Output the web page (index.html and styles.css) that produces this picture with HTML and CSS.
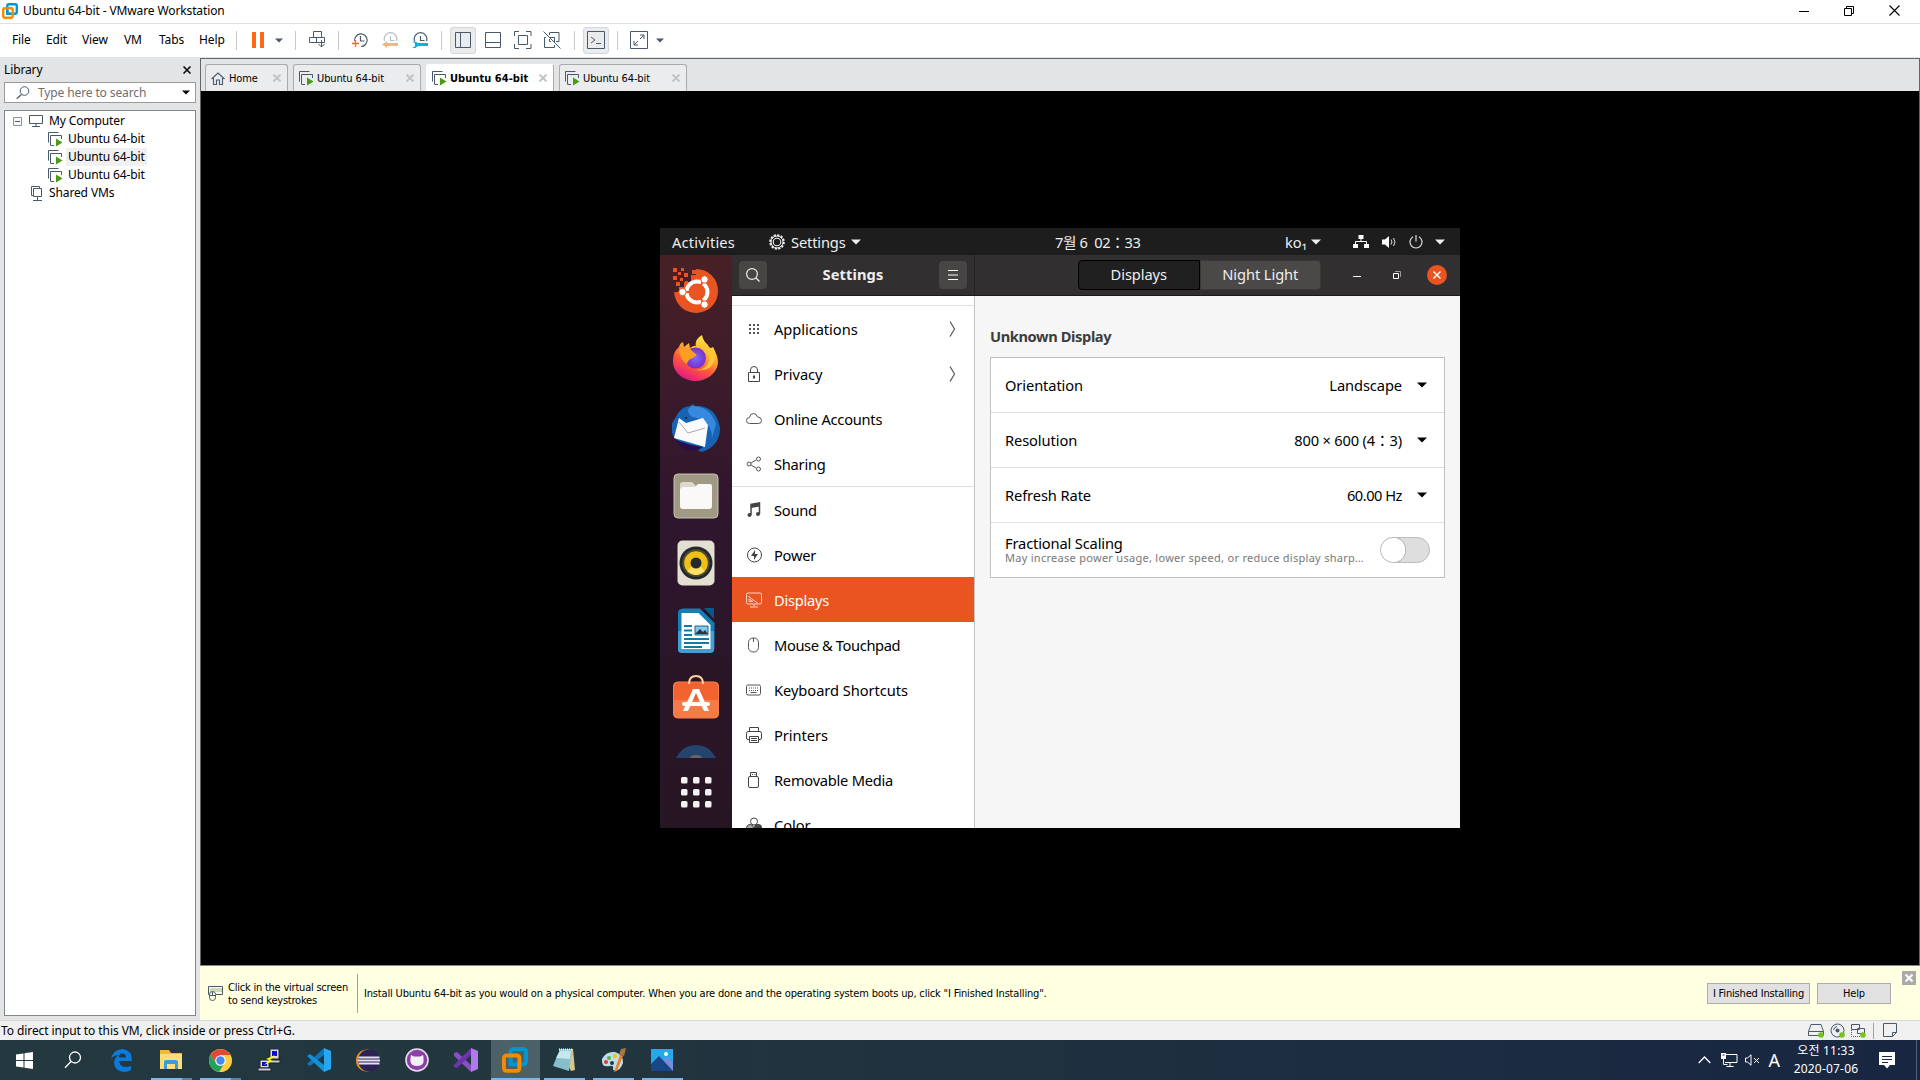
FILE: index.html
```html
<!DOCTYPE html>
<html lang="en">
<head>
<meta charset="utf-8">
<title>Ubuntu 64-bit - VMware Workstation</title>
<link rel="stylesheet" href="styles.css">
</head>
<body>
<svg class="defs" width="0" height="0">
  <defs>
    <symbol id="vmware" viewBox="0 0 16 16"><rect x="5.3" y="1.2" width="9.5" height="9.5" rx="1.6" fill="none" stroke="#0095d3" stroke-width="2.4"/><rect x="1.2" y="5.2" width="9.5" height="9.5" rx="1.6" fill="none" stroke="#f38b00" stroke-width="2.4"/><path d="M5.3 7V10.7H8.5" fill="none" stroke="#0095d3" stroke-width="2.4"/></symbol>
    <symbol id="vm" viewBox="0 0 15 15"><path d="M.5 10.5V.5h10M3 13H2.500V3.500h11V7M2.500 13.500H6" fill="none" stroke="#47596b"/><path d="M8 6.500v8l6.500-4z" fill="#489b12"/></symbol>
    <symbol id="clock" viewBox="0 0 16 16"><path d="M2.600 9A6.300 6.300 0 1 1 9 14.500M8.500 4v5h4" fill="none" stroke="currentColor" stroke-width="1.200"/></symbol>
    <symbol id="clocktop" viewBox="0 0 16 16"><path d="M2.600 9A6.300 6.300 0 1 1 14.500 9M8.500 4v4.500h4" fill="none" stroke="currentColor" stroke-width="1.200"/></symbol>
    <symbol id="tabx" viewBox="0 0 8 8"><path d="M.5 .5l7 7M7.500 .5l-7 7" stroke="#c3c4c6" stroke-width="2"/></symbol>
    <symbol id="down" viewBox="0 0 10 6"><path d="M0 .5h10L5 5.500z" fill="currentColor"/></symbol>
    <symbol id="chev" viewBox="0 0 8 16"><path d="M1 .5l4.500 7.500L1 15.500" fill="none" stroke="#555" stroke-width="1.200"/></symbol>
  </defs>
</svg>

<header class="titlebar">
  <svg width="16" height="16"><use href="#vmware"/></svg>
  <h1>Ubuntu 64-bit - VMware Workstation</h1>
  <div class="winbtns">
    <svg width="10" height="10"><path d="M0 5.500h10" stroke="#000"/></svg>
    <svg width="10" height="10"><path d="M.5 2.500h7v7h-7zM2.500 2V.5h7v7H8" fill="none" stroke="#000"/></svg>
    <svg width="11" height="11"><path d="M.5 .5l10 10M10.500 .5l-10 10" stroke="#000" stroke-width="1.100"/></svg>
  </div>
</header>

<nav class="menubar">
  <span>File</span><span>Edit</span><span>View</span><span>VM</span><span>Tabs</span><span>Help</span>
  <i class="sep"></i>
  <svg width="12" height="16"><path d="M0 0h4v16H0zM8 0h4v16H8z" fill="#ff671b"/></svg>
  <svg class="slate" width="8" height="5"><use href="#down"/></svg>
  <i class="sep"></i>
  <svg width="17" height="18"><path d="M4.500 .5h8v6h-8zM.5 6.500h7v5h-7zM7.500 6.500h8v5h-8zM12.500 9v7M9.500 13l3 3 3-3" fill="none" stroke="#47596b"/></svg>
  <i class="sep"></i>
  <svg class="slate" width="16" height="16"><use href="#clock"/><path d="M0 11.500h7M3.500 8v7" stroke="#ff671b" stroke-width="1.300"/></svg>
  <svg class="muted" width="16" height="16"><use href="#clocktop"/><path d="M0 12.500l5-3.500v2h11v3H5v2z" fill="#ffb08a"/></svg>
  <svg class="slate" width="16" height="16"><use href="#clocktop"/><path d="M0 9.500h3.500L6 11h10v3H6l-2.500 2H0l3-1.800v-3z" fill="#00b7d4"/></svg>
  <i class="sep"></i>
  <b class="pressed"><svg width="16" height="16"><path d="M.5 .5h15v15H.5zM5.500 0v16" fill="none" stroke="#47596b"/></svg></b>
  <svg width="17" height="16"><path d="M1.500 .5h15v15h-15zM1 10.500h16" fill="none" stroke="#47596b"/></svg>
  <svg width="19" height="18"><path d="M1.500 5V.5H6M13 .5h5V5M18 13v4.500h-5M6 17.500H1.500V13M5.500 4.500h9v9h-9z" fill="none" stroke="#47596b"/></svg>
  <svg width="19" height="18"><path d="M7 1.500h9v9h-3M3 6.500h-1.500v10h10V14M7 6.500h4.500V11M6.500 1.500V4M8 10.500h-1.500V8M.5 .5l17 17" fill="none" stroke="#47596b"/></svg>
  <i class="sep"></i>
  <b class="pressed"><svg width="18" height="18"><path d="M.5 .5h17v17H.5zM4 6l4 3-4 3M9 12.500h5" fill="none" stroke="#47596b"/></svg></b>
  <i class="sep"></i>
  <svg width="18" height="18"><path d="M.5 .5h17v17H.5zM10 4h4v4M4 10v4h4M14 4l-4 4M4 14l4-4" fill="none" stroke="#47596b"/></svg>
  <svg class="slate" width="8" height="5"><use href="#down"/></svg>
</nav>

<div class="workspace">
  <aside class="library">
    <div class="lib-head"><span>Library</span><svg width="8" height="8"><path d="M.5 .5l7 7M7.500 .5l-7 7" stroke="#000" stroke-width="1.500"/></svg></div>
    <div class="search"><svg width="14" height="14"><circle cx="8.500" cy="5" r="4.300" fill="none" stroke="#47596b"/><path d="M5.500 8.500L.7 12.800" stroke="#47596b" stroke-width="1.200"/></svg><span>Type here to search</span><svg width="8" height="5"><use href="#down"/></svg></div>
    <div class="tree">
      <div class="node root"><svg width="9" height="9"><path d="M.5 .5h8v8h-8z" fill="#fafafa" stroke="#919191"/><path d="M2 4.500h5" stroke="#3a56a5"/></svg><svg width="14" height="12"><path d="M.5 .5h13v8H.5zM7 9v2M3 11.500h8" fill="none" stroke="#47596b"/></svg><span>My Computer</span></div>
      <div class="node vm"><svg width="15" height="15"><use href="#vm"/></svg><span>Ubuntu 64-bit</span></div>
      <div class="node vm current"><svg width="15" height="15"><use href="#vm"/></svg><span>Ubuntu 64-bit</span></div>
      <div class="node vm"><svg width="15" height="15"><use href="#vm"/></svg><span>Ubuntu 64-bit</span></div>
      <div class="node shared"><svg width="12" height="15"><path d="M2.500 9.500h-2v-9h8v2M2.500 2.500h8v8h-8zM6.500 11v3M2 14.500h9" fill="none" stroke="#47596b"/></svg><span>Shared VMs</span></div>
    </div>
  </aside>

  <main class="console">
    <div class="tabs">
      <div class="tab home"><svg width="14" height="13"><path d="M.5 7L7 1l6.500 6M2.500 6v6.500h3V8h3v4.500h3V6" fill="none" stroke="#47596b" stroke-width="1.100"/></svg><span>Home</span><svg width="8" height="8"><use href="#tabx"/></svg></div>
      <div class="tab"><svg width="15" height="15"><use href="#vm"/></svg><span>Ubuntu 64-bit</span><svg width="8" height="8"><use href="#tabx"/></svg></div>
      <div class="tab active"><svg width="15" height="15"><use href="#vm"/></svg><span>Ubuntu 64-bit</span><svg width="8" height="8"><use href="#tabx"/></svg></div>
      <div class="tab"><svg width="15" height="15"><use href="#vm"/></svg><span>Ubuntu 64-bit</span><svg width="8" height="8"><use href="#tabx"/></svg></div>
    </div>

    <div class="stage">
      <section class="guest">
        <div class="topbar">
          <span class="activities">Activities</span>
          <svg class="gear" width="16" height="16" fill="none" stroke="#eee"><circle cx="8" cy="8" r="6.800" stroke-width="2" stroke-dasharray="2.200 1.360"/><circle cx="8" cy="8" r="6" stroke-width="1"/><circle cx="8" cy="8" r="3.800" stroke-width="1.100"/></svg>
          <span class="appname">Settings</span><svg width="10" height="6"><use href="#down"/></svg>
          <span class="clock">7월 6&nbsp; 02：33</span>
          <span class="ime">ko₁</span><svg width="10" height="6"><use href="#down"/></svg>
          <svg class="net" width="16" height="14"><path d="M5.500 0h5v4h-5zM0 9h5v4H0zM11 9h5v4h-5z" fill="#fff"/><path d="M8 4v3M2.500 9V6.500h11V9" fill="none" stroke="#fff"/></svg>
          <svg class="vol" width="15" height="14"><path d="M0 4.500h3L7 1v12L3 9.500H0z" fill="#fff"/><path d="M9 4.500q2 2.500 0 5M11.500 3q3 4 0 8" fill="none" stroke="#ddd"/></svg>
          <svg class="pow" width="14" height="14"><path d="M4 1.800a6 6 0 1 0 6 0M7 0v6.500" fill="none" stroke="#ddd" stroke-width="1.200"/></svg>
          <svg width="10" height="6"><use href="#down"/></svg>
        </div>
        <div class="desktop">
          <div class="dock">
            <svg class="d1" width="46" height="46" viewBox="0 0 46 46"><path d="M23 1a22 22 0 1 1-21.900 23H6v-5h5v-5h7V7h5z" fill="#e95420"/><g fill="#e95420"><path d="M0 0h4v4H0zM8 0h3v3H8zM5 4h3v3H5zM11 5h4v4h-4zM0 8h4v4H0zM19 2h4v4h-4zM7 10h3v3H7zM12 13h3v3h-3zM3 14h4v4H3z"/></g><circle cx="24" cy="24" r="10.500" fill="none" stroke="#fff" stroke-width="4"/><g stroke="#e95420" stroke-width="2"><path d="M24 24L7 24M24 24l8.500-15M24 24l8.500 15"/></g><circle cx="24" cy="24" r="8" fill="#e95420"/><g fill="#fff" stroke="#e95420"><circle cx="9.500" cy="24" r="3.700"/><circle cx="31.500" cy="11.500" r="3.700"/><circle cx="31.500" cy="36.500" r="3.700"/></g></svg>
            <svg class="d2" width="46" height="47" viewBox="0 0 46 47"><defs><linearGradient id="fx" x1=".8" y1="0" x2=".3" y2="1"><stop offset="0" stop-color="#fff44f"/><stop offset=".35" stop-color="#ffb72d"/><stop offset=".65" stop-color="#ff5a38"/><stop offset="1" stop-color="#e31587"/></linearGradient><radialGradient id="fp"><stop offset="0" stop-color="#7b6cff"/><stop offset="1" stop-color="#7a2fc4"/></radialGradient></defs><path d="M6 12q1-4 4-5l1 5 5-4 1 5q4-3 6-2Q21 5 29 0q1 6 6 10l1 4 4-2q5 9 5 16a22 19 0 0 1-45-3Q0 17 6 12z" fill="url(#fx)"/><path d="M24 11q14 1 12 15-3 9-13 9 16 2 19-12 0-10-11-14z" fill="#ffc63a"/><circle cx="22.500" cy="23" r="10.500" fill="url(#fp)"/><path d="M6 15q6-4 11-1l7 6-4 3q-5 1-6 6-7-4-8-14z" fill="#ff9d23"/></svg>
            <svg class="d3" width="48" height="48" viewBox="0 0 48 48"><path d="M4 13Q8 3 18 2l3-2 2 2Q44 1 48 24q0 18-18 24l-5-2Q10 46 5 37-6 25 4 13z" fill="#1764b4"/><path d="M20 2q18 0 24 18l-4 14q0-18-20-21-8-7 0-11z" fill="#3689dc"/><path d="M2 34L7 14l7 5 17-5 5 7-3 22z" fill="#fafafa"/><path d="M7 18l9 11 17-5" fill="none" stroke="#aaa"/><path d="M3 35q9 5 28 8Q26 47 22 47 8 46 3 35z" fill="#27104c"/><path d="M12 14l3-1v2z" fill="#111"/></svg>
            <svg class="d4" width="46" height="46" viewBox="0 0 46 46"><rect x="1" y="1" width="44" height="44" rx="4" fill="#a09a85" stroke="#c6c1b0"/><path d="M7 12q0-3 3-3h9l4 4v6H7z" fill="#ddd9ce"/><path d="M7 16l3-2h12l3-3h12q2 0 2 2v20q0 3-3 3H10q-3 0-3-3z" fill="#faf9f7"/></svg>
            <svg class="d5" width="38" height="46" viewBox="0 0 38 46"><rect x=".5" y=".5" width="37" height="45" rx="5" fill="#e3dfd2"/><circle cx="19" cy="23" r="16.500" fill="#25282a"/><circle cx="19" cy="23" r="12.800" fill="#f0c118" stroke="#4f4b34" stroke-width="2"/><path d="M10 31l9-8 9 8q-9 8-18 0z" fill="#ffdf67"/><circle cx="19" cy="23" r="5.500" fill="#252a2b"/></svg>
            <svg class="d6" width="38" height="46" viewBox="0 0 38 46"><path d="M5 .5h18L37.500 15v25q0 5-5 5H5q-4 0-4-4V5q0-4 4-4z" fill="#137fb7"/><path d="M1 23h36v18q0 4-4 4H5q-4 0-4-4z" fill="#41a0d1"/><path d="M4.500 5h17l12 12v24h-29z" fill="#fff"/><path d="M27 0h10v11z" fill="#07588b"/><path d="M7 18h8M7 22.500h8M7 27h8M7 31h25M7 35h25M7 39h18" stroke="#1478ad" stroke-width="2"/><path d="M18 18h13v9H18z" fill="#85c9ef" stroke="#15689a"/><path d="M18 26l5-5 3 3 2-2 3 4z" fill="#333"/></svg>
            <svg class="d7" width="46" height="44" viewBox="0 0 46 44"><rect x=".5" y="7" width="45" height="36" rx="4" fill="#f26330" stroke="#ff7d47"/><path d="M1 25h44v14q0 4-4 4H5q-4 0-4-4z" fill="#f77b46"/><path d="M16 9q0-8 7-8t7 8" fill="none" stroke="#ffd39b" stroke-width="2"/><path d="M10 36l10-22h6l10 22h-5l-8-18-8 18z" fill="#fff"/><rect x="9" y="27" width="28" height="4" rx="2" fill="#fff"/></svg>
            <svg class="d8" width="40" height="13" viewBox="0 0 40 13"><path d="M0 13Q7 0 20 0t20 13z" fill="#24446e"/><path d="M14 13q0-3 6-3t6 3z" fill="#6b6269"/></svg>
            <svg class="d9" width="31" height="31" viewBox="0 0 31 31" fill="#f4f1f2"><rect width="6.500" height="6.500" rx="1.500"/><rect x="12" width="6.500" height="6.500" rx="1.500"/><rect x="24" width="6.500" height="6.500" rx="1.500"/><rect y="12" width="6.500" height="6.500" rx="1.500"/><rect x="12" y="12" width="6.500" height="6.500" rx="1.500"/><rect x="24" y="12" width="6.500" height="6.500" rx="1.500"/><rect y="24" width="6.500" height="6.500" rx="1.500"/><rect x="12" y="24" width="6.500" height="6.500" rx="1.500"/><rect x="24" y="24" width="6.500" height="6.500" rx="1.500"/></svg>
          </div>
          <div class="panel">
            <div class="headerbar">
              <div class="head-left">
                <b class="hbtn"><svg width="14" height="14"><circle cx="6" cy="6" r="5.400" fill="none" stroke="#eee" stroke-width="1.200"/><path d="M10 10l3.500 3.500" stroke="#eee" stroke-width="1.300"/></svg></b>
                <strong>Settings</strong>
                <b class="hbtn"><svg width="10" height="10"><path d="M0 .5h10M0 5h10M0 9.500h10" stroke="#fff"/></svg></b>
              </div>
              <div class="head-right">
                <div class="switcher"><span class="on">Displays</span><span>Night Light</span></div>
                <svg class="wmin" width="8" height="2"><path d="M0 .5h8" stroke="#fff"/></svg>
                <svg class="wmax" width="8" height="8"><path d="M.5 2.500h5v5h-5z" fill="none" stroke="#fff"/><path d="M2 .5h5.500V6" fill="none" stroke="#999"/></svg>
                <svg class="wclose" width="20" height="20"><circle cx="10" cy="10" r="10" fill="#e95420"/><path d="M6.500 6.500l7 7M13.500 6.500l-7 7" stroke="#fff" stroke-width="1.400"/></svg>
              </div>
            </div>
            <div class="body">
              <div class="list">
                <div class="item"><svg width="16" height="16" fill="#555"><path d="M3 3h2v2H3zM7 3h2v2H7zM11 3h2v2h-2zM3 7h2v2H3zM7 7h2v2H7zM11 7h2v2h-2zM3 11h2v2H3zM7 11h2v2H7zM11 11h2v2h-2z"/></svg><span>Applications</span><svg width="8" height="16"><use href="#chev"/></svg></div>
                <div class="item"><svg width="16" height="16"><path d="M2.500 6.500h11v9h-11zM4.500 6V4q0-3.500 3.500-3.500T11.500 4v2" fill="none" stroke="#444"/><path d="M7 9.500h2v3H7z" fill="#444"/></svg><span>Privacy</span><svg width="8" height="16"><use href="#chev"/></svg></div>
                <div class="item tight"><svg width="16" height="16"><path d="M3.500 12.500q-3 0-3-3t3-3Q4 2.500 7.500 2.500q3 0 4 3.500 4 0 4 3.500 0 3-3 3z" fill="none" stroke="#555"/></svg><span>Online Accounts</span></div>
                <div class="item tight"><svg width="16" height="16" fill="none" stroke="#555"><path d="M5 7l5-3M5 9l5 3"/><circle cx="3" cy="8" r="2"/><circle cx="12.500" cy="3" r="2"/><circle cx="12.500" cy="13" r="2"/></svg><span>Sharing</span></div>
                <div class="item first tight"><svg width="16" height="16"><path d="M5 13V2.500l8.500-1.500v11" fill="none" stroke="#444" stroke-width="1.500"/><path d="M5 2h8.500v2.500L5 6z" fill="#444"/><circle cx="3.500" cy="13" r="2" fill="#444"/><circle cx="12" cy="12" r="2" fill="#444"/></svg><span>Sound</span></div>
                <div class="item tight"><svg width="16" height="16"><circle cx="8.500" cy="8" r="7" fill="none" stroke="#444"/><path d="M9 3L5 9h3v4l4-6H9z" fill="#444"/></svg><span>Power</span></div>
                <div class="item selected tight"><svg width="16" height="16" fill="none" stroke="#ffd4c5"><rect x=".5" y="1" width="15" height="11" rx="1.500"/><path d="M2 4l10 7.500M3 7v2.500h4zM8 12v2M4 15h8"/></svg><span>Displays</span></div>
                <div class="item tighter"><svg width="16" height="16" fill="none" stroke="#555"><rect x="2.500" y="1" width="10" height="14" rx="4.500"/><path d="M7.500 1v4"/></svg><span>Mouse &amp; Touchpad</span></div>
                <div class="item"><svg width="16" height="16" fill="none" stroke="#555"><rect x=".5" y="3" width="14" height="10" rx="1.500"/><path d="M3 6h10M3 8.500h10" stroke-dasharray="1 1"/><path d="M4.500 10.500h6"/></svg><span>Keyboard Shortcuts</span></div>
                <div class="item"><svg width="16" height="16" fill="none" stroke="#444"><path d="M3.500 4V.5h9V4M3 12.500H2Q.5 12.500.5 11V6.500Q.5 4.500 2 4.500h12q1.500 0 1.500 2V11q0 1.500-1.500 1.500h-1M3.500 9.500h9v6h-9zM5 11.500h6M5 13.500h6"/></svg><span>Printers</span></div>
                <div class="item tight"><svg width="16" height="16" fill="none" stroke="#444"><rect x="2.500" y="4.500" width="10" height="11" rx="1.500"/><path d="M4.500 4V.5h6V4M6 2.500h1M8.500 2.500h1"/></svg><span>Removable Media</span></div>
                <div class="item"><svg width="16" height="16"><circle cx="8" cy="4.500" r="3.500" fill="none" stroke="#444"/><circle cx="4" cy="11" r="3.500" fill="#aaa" stroke="#444"/><circle cx="12" cy="11" r="4" fill="#444"/></svg><span>Color</span></div>
              </div>
              <div class="content">
                <h2>Unknown Display</h2>
                <div class="card">
                  <div class="row"><span>Orientation</span><span>Landscape</span><svg width="10" height="6"><use href="#down"/></svg></div>
                  <div class="row"><span>Resolution</span><span class="res">800 × 600 (4：3)</span><svg width="10" height="6"><use href="#down"/></svg></div>
                  <div class="row"><span>Refresh Rate</span><span class="rate">60.00 Hz</span><svg width="10" height="6"><use href="#down"/></svg></div>
                  <div class="row scaling"><div><p>Fractional Scaling</p><small>May increase power usage, lower speed, or reduce display sharp…</small></div><i class="toggle"></i></div>
                </div>
              </div>
            </div>
          </div>
        </div>
      </section>
    </div>

    <div class="hint">
      <svg width="15" height="15" fill="none" stroke="#47596b"><path d="M4 8.500H.5v-8h14v8H8"/><path d="M2.500 3h11M2.500 5h11" stroke-dasharray="1 1"/><rect x="1.500" y="5.500" width="6" height="9" rx="3" fill="#ffffe1"/><path d="M4.500 6v3M2 9.500h5"/></svg>
      <p class="grab">Click in the virtual screen<br>to send keystrokes</p>
      <p class="install">Install Ubuntu 64-bit as you would on a physical computer. When you are done and the operating system boots up, click "I Finished Installing".</p>
      <button class="finish">I Finished Installing</button>
      <button class="help">Help</button>
      <svg class="dismiss" width="14" height="14"><path d="M0 0h14v14H0z" fill="#a9a9a9"/><path d="M3.500 3.500l7 7M10.500 3.500l-7 7" stroke="#fff" stroke-width="2.200"/></svg>
    </div>
  </main>
</div>

<footer class="status">
  <span>To direct input to this VM, click inside or press Ctrl+G.</span>
  <svg width="17" height="15"><path d="M.5 8.500L3 1.500h10l2.500 7v4H.5zM.5 8.500h15" fill="none" stroke="#47596b"/><circle cx="13" cy="12" r="2.800" fill="#73c41d"/></svg>
  <svg width="16" height="15"><circle cx="7.500" cy="7.500" r="6.500" fill="none" stroke="#47596b"/><circle cx="7.500" cy="7.500" r="2" fill="#47596b"/><path d="M3.500 7q.5-3 3.500-3.500" fill="none" stroke="#47596b"/><circle cx="12" cy="12" r="2.800" fill="#73c41d"/></svg>
  <svg width="16" height="15"><path d="M.5 1.500h8v5h-8zM6.500 5.500h7v5h-7z" fill="#f0f0f0" stroke="#47596b"/><path d="M.5 7v6.500h9" fill="none" stroke="#47596b" stroke-dasharray="1 1"/><circle cx="12" cy="12" r="2.800" fill="#73c41d"/></svg>
  <i></i>
  <svg width="15" height="15"><path d="M.5 .5h13v9l-4 4h-9zM9.500 13.500v-4h4" fill="none" stroke="#47596b"/></svg>
</footer>

<div class="taskbar">
  <div class="task"><svg width="17" height="17" viewBox="0 0 17 17" fill="#fff"><path d="M0 2.500l7.500-1v6.500H0zM8.500 1.300L17 0v8H8.500zM0 9h7.500v6.500l-7.500-1zM8.500 9H17v8l-8.500-1.300z"/></svg></div>
  <div class="task"><svg width="18" height="18" fill="none" stroke="#fff" stroke-width="1.300"><circle cx="11" cy="6.500" r="5.500"/><path d="M7 10.500L1 16.800"/></svg></div>
  <div class="task"><svg width="22" height="24" viewBox="0 0 22 24"><path d="M0 11Q2 1 12 1q9 1 9 12H8q1 6 7 6 3 0 5-1.500v4.500q-3 2-7 2-10-1-10-10 1-5 5-7Q3 7 0 11zm8-1.500h7q0-4-3.500-4T8 9.500z" fill="#0b7ad8"/></svg></div>
  <div class="task open more"><svg width="22" height="20" viewBox="0 0 22 20"><path d="M0 0h9l2 3H22v16H0z" fill="#f3b63d"/><path d="M0 4h22v15H0z" fill="#ffdc78"/><path d="M4 19v-7q0-2 2-2h10q2 0 2 2v7h-3v-5H7v5z" fill="#3c9bdb"/></svg></div>
  <div class="task open more"><svg width="23" height="23" viewBox="0 0 23 23"><circle cx="11.500" cy="11.500" r="11.500" fill="#ffcd40"/><path d="M1.500 6A11.500 11.500 0 0 1 21.500 6H11.500L7 14z" fill="#e2493b"/><path d="M1.500 6A11.500 11.500 0 0 0 10 23l5-8-8-1z" fill="#22a35d"/><circle cx="11.500" cy="11.500" r="5.300" fill="#fff"/><circle cx="11.500" cy="11.500" r="4.200" fill="#4688f1"/></svg></div>
  <div class="task"><svg width="23" height="23" viewBox="0 0 23 23"><path d="M12 0h9v10h-9zM2 11h9v8H2z" fill="#ddd" stroke="#222"/><path d="M14 2h5v5h-5zM4 13h5v4H4z" fill="#0909d8"/><path d="M11 11h11v3H11zM0 19h13v3H0z" fill="#ccc" stroke="#222"/><path d="M17 6l-9 4 3 1-5 5 9-4-3-1z" fill="#ff0"/></svg></div>
  <div class="task"><svg width="24" height="24" viewBox="0 0 24 24"><path d="M17 7L3 18l-3-2L17 0z" fill="#0879be"/><path d="M0 8l3-2 14 11v7z" fill="#1590d8"/><path d="M17 0l7 3v18l-7 3z" fill="#28a6f0"/></svg></div>
  <div class="task"><svg width="24" height="23" viewBox="0 0 24 23"><circle cx="11" cy="11.500" r="11" fill="#f7941e"/><circle cx="13" cy="11.500" r="11" fill="#2c2255"/><path d="M2.500 8.500h21M2 11.500h22M2.500 14.500h21" stroke="#e5e2f4" stroke-width="1.800"/></svg></div>
  <div class="task"><svg width="24" height="24" viewBox="0 0 24 24"><circle cx="12" cy="12" r="11" fill="#8b3fa7" stroke="#eadff0" stroke-width="1.600"/><path d="M6 7l3 1.500h6L18 7q1 3 .5 7-1 4-6.500 4t-6.500-4Q5 10 6 7z" fill="#f3edf5"/></svg></div>
  <div class="task"><svg width="24" height="24" viewBox="0 0 24 24"><path d="M0 5l3-1 14 13v7L0 8z" fill="#8850c7"/><path d="M0 16V8l4 4z" fill="#233840"/><path d="M17 0L0 17v2l3 1L17 7z" fill="#6c35ad"/><path d="M17 0l7 3v18l-7 3z" fill="#b07be8"/></svg></div>
  <div class="task current open"><svg width="26" height="26"><use href="#vmware"/></svg></div>
  <div class="task open"><svg width="24" height="24" viewBox="0 0 24 24"><path d="M8 1h13l2 21-4 1z" fill="#d6c88c"/><path d="M8 1h12l-3 22-16-5z" fill="#86bec9"/><path d="M8 3h11l-1 8-14-1z" fill="#c5e8ec"/><path d="M7 1.500h14" stroke="#fff" stroke-width="2" stroke-dasharray="1 1"/></svg></div>
  <div class="task open"><svg width="25" height="25" viewBox="0 0 25 25"><path d="M1 11Q5 3 14 4q9 3 8 11-3 9-10 7 1-5-3-4-9 2-8-7z" fill="#bfdcec"/><circle cx="5" cy="14" r="2" fill="#df3d37"/><circle cx="8" cy="10" r="2" fill="#57b441"/><circle cx="14" cy="8" r="2.200" fill="#efc12a"/><circle cx="11" cy="15" r="2" fill="#263b45"/><path d="M13 24l6-17 3 1-6 15z" fill="#e7812d"/><path d="M18 7l2-6 5-1-2 8z" fill="#a87543"/></svg></div>
  <div class="task open"><svg width="22" height="22" viewBox="0 0 22 22"><path d="M0 0h22v22H0z" fill="#28a8ea"/><path d="M10 14l6-6 6 6v8H10z" fill="#7a8bdd"/><path d="M0 15l8-8 14 15H0z" fill="#174787"/><circle cx="15" cy="5" r="2" fill="#fff"/></svg></div>
  <div class="tray">
    <svg class="t1" width="13" height="8"><path d="M.7 7l5.800-6 5.800 6" fill="none" stroke="#fff" stroke-width="1.300"/></svg>
    <svg class="t2" width="17" height="14"><path d="M4 1.500h12v8H4M5.500 13.500h7M9 10v3M2.500 6v5.500h4" fill="none" stroke="#fff"/><path d="M0 0h5v6H0z" fill="#fff"/><path d="M1.500 1.500h2v1h-2z" fill="#1a2942"/></svg>
    <svg class="t3" width="15" height="12"><path d="M.5 4h2L6 .8v10.400L2.500 8h-2zM9 4l5 5M14 4l-5 5" fill="none" stroke="#fff"/></svg>
    <span class="lang">A</span>
    <div class="datetime">오전 11:33<br>2020-07-06</div>
    <svg class="t4" width="16" height="17"><path d="M0 0h16v13h-5l-3 3.500L5 13H0z" fill="#fff"/><path d="M3 4.500h10M3 7.500h10M3 10.500h6" stroke="#1a2942"/></svg>
  </div>
</div>
</body>
</html>
```
FILE: styles.css
```css
* { box-sizing: border-box; }
body { margin: 0; width: 1920px; height: 1080px; overflow: hidden; display: flex; flex-direction: column; font: 12px/18px "Noto Sans", "Noto Sans CJK KR", sans-serif; letter-spacing: -.12px; color: #000; background: #fff; }
svg { display: block; flex: none; }
.defs { position: absolute; }
h1, h2, p { margin: 0; font: inherit; }
span { white-space: nowrap; }

.titlebar { height: 24px; flex: none; display: flex; align-items: center; padding: 0 20px 2px 2px; gap: 5px; border-bottom: 1px solid #e0e1e3; }
.winbtns { margin-left: auto; display: flex; gap: 35px; align-items: center; }

.menubar { height: 33px; flex: none; display: grid; align-items: center; padding: 0 0 1px 12px; grid-template-columns: 34px 36px 42px 35px 40px 37px 16px 23px 20px 14px 29px 14px 30px 30px 29px 9px 34px 29px 30px 31px 9px 34px 13px 26px 10px; }
.sep { width: 1px; height: 19px; background: #c8c9cb; }
.slate { color: #47596b; }
.muted { color: #b5bcc4; }
.pressed { width: 26px; height: 27px; display: grid; place-items: center; border: 1px solid #d5d6d8; border-radius: 3px; background: #eaebed; }

.workspace { height: 963px; flex: none; display: flex; background: #e3e4e6; }
.library { width: 200px; padding: 2px 4px 3px; }
.lib-head { display: flex; justify-content: space-between; align-items: center; height: 21px; padding-right: 5px; }
.search { height: 21px; margin-top: 2px; border: 1px solid #999; background: #fff; display: flex; align-items: center; padding: 0 5px 0 11px; color: #6e6e6e; width: 192px; }
.search span { margin: 0 auto 0 8px; letter-spacing: -.12px; }
.search svg:last-child { color: #000; }
.tree { margin-top: 7px; width: 192px; height: 906px; border: 1px solid #828790; background: #fff; }
.node { height: 18px; display: flex; align-items: center; }
.root { padding-left: 8px; gap: 6px; margin-top: 1px; }
.root svg:nth-child(2) { margin-left: 1px; }
.vm { padding-left: 43px; gap: 3px; }
.vm span { padding: 0 2px; }
.current span { background: #f0f0f0; }
.shared { padding-left: 26px; gap: 6px; }

.console { flex: 1; display: flex; flex-direction: column; margin-top: 1px; border: 1px solid #666; border-width: 1px 1px 0; }
.tabs { height: 32px; display: flex; align-items: flex-end; gap: 5px; padding-left: 4px; font: 11px/14px "DejaVu Sans Condensed", "DejaVu Sans", sans-serif; font-stretch: condensed; }
.tab { width: 128px; height: 27px; border: 1px solid #a9abae; border-bottom: 0; border-radius: 3px 3px 0 0; background: #ebecee; display: flex; align-items: center; padding: 0 6px 0 5px; gap: 3px; }
.tab span { padding-top: 1px; }
.tab svg:last-child { margin-left: auto; }
.home { width: 83px; gap: 4px; }
.active { background: #fff; font-weight: bold; letter-spacing: .05px; border-left-color: #fff; border-top-color: #fff; }
.stage { height: 874px; flex: none; padding-top: 137px; background: #000; display: grid; justify-content: center; align-content: start; }

.guest { width: 800px; height: 600px; overflow: hidden; font: 14.67px/20px "Noto Sans", "Noto Sans CJK KR", sans-serif; letter-spacing: 0; display: flex; flex-direction: column; }
.topbar { height: 27px; flex: none; background: #1d1d1d; color: #eee; display: flex; align-items: center; padding-left: 12px; }
.activities { width: 97px; letter-spacing: .2px; }
.appname { margin: 0 6px 0 6px; width: 54px; letter-spacing: -.15px; }
.clock { margin-left: 194px; width: 130px; letter-spacing: -.4px; }
.ime { margin-left: 100px; width: 22px; margin-right: 4px; line-height: 16px; }
.net { margin-left: 32px; }
.vol { margin-left: 13px; }
.pow { margin: 0 12px; }
.desktop { height: 573px; display: flex; }
.dock { width: 72px; flex: none; display: flex; flex-direction: column; align-items: center; background: linear-gradient(#482126, #3a1a2b 25%, #2f162d 45%, #261523 100%); padding-top: 13px; }
.d2 { margin-top: 21px; }
.d3 { margin-top: 22px; }
.d4 { margin-top: 21px; }
.d5 { margin-top: 21px; }
.d6 { margin-top: 22px; }
.d7 { margin-top: 21px; }
.d8 { margin-top: 26px; }
.d9 { margin-top: 19px; }
.panel { width: 728px; display: flex; flex-direction: column; }
.headerbar { height: 41px; flex: none; display: flex; background: #312f30; border-bottom: 1px solid #1b1a1a; color: #eee; padding-bottom: 1px; }
.head-left { width: 243px; border-right: 1px solid #222; padding: 0 7px; display: flex; align-items: center; justify-content: space-between; letter-spacing: .1px; }
.head-left strong { margin-top: -1px; }
.hbtn { width: 28px; height: 28px; background: #474645; border-radius: 4px; display: grid; place-items: center; }
.head-right { flex: 1; display: flex; align-items: center; padding-left: 103px; }
.switcher { display: flex; width: 243px; height: 30px; letter-spacing: -.08px; }
.switcher span { flex: 1; text-align: center; line-height: 27px; background: #4b4947; border: 1px solid #3a3837; border-radius: 0 4px 4px 0; }
.switcher .on { background: #202020; border: 1px solid #000; border-radius: 4px 0 0 4px; }
.wmin { margin: 5px 0 0 32px; }
.wmax { margin-left: 32px; }
.wclose { margin-left: 26px; }
.body { height: 532px; display: flex; }
.list { width: 243px; flex: none; padding-top: 9px; border-right: 1px solid #c3c3c3; background: linear-gradient(#e0e0e0, #e0e0e0) 0 9px / 100% 1px no-repeat #fff; overflow: hidden; }
.item { height: 45px; flex: none; display: flex; align-items: center; padding: 0 17px 0 14px; gap: 12px; letter-spacing: -.05px; }
.item:first-child { margin-top: 1px; }
.item span { flex: 1; }
.tight { letter-spacing: -.25px; }
.tighter { letter-spacing: -.38px; }
.first { border-top: 1px solid #dedede; height: 46px; }
.selected { background: #e95420; color: #fff; }
.content { flex: 1; background: #f6f6f6; padding: 29px 15px; }
.content h2 { font-weight: bold; color: #3d3d3d; line-height: 22px; height: 32px; letter-spacing: -.4px; }
.card { border: 1px solid #bfbfbf; background: #fff; width: 455px; }
.row { height: 55px; display: flex; align-items: center; padding: 0 17px 0 14px; border-bottom: 1px solid #e0e0e0; letter-spacing: -.1px; }
.row:last-child { border: 0; height: 54px; padding-right: 14px; }
.row span { margin-top: -1px; }
.row span:first-child { flex: 1; }
.row > svg { margin-left: 15px; }
.row .res { letter-spacing: -.17px; margin-top: 0; }
.rate { letter-spacing: -.5px; }
.scaling { justify-content: space-between; }
.scaling p { line-height: 16px; margin-top: -1px; letter-spacing: -.15px; }
.scaling small { display: block; font-size: 11px; line-height: 14px; color: #777; white-space: nowrap; letter-spacing: .28px; }
.toggle { width: 50px; height: 26px; border-radius: 13px; border: 1px solid #bbb; background: radial-gradient(circle at 12px 12px, #fff 12px, #bbb 12.500px, #bbb 13px, #dedede 13.500px); }

.hint { height: 55px; margin: 0 -1px; border-top: 1px solid #888; background: #ffffe1; display: flex; align-items: center; padding-left: 8px; font: 11px/13px "DejaVu Sans Condensed", "DejaVu Sans", sans-serif; font-stretch: condensed; letter-spacing: -.17px; }
.grab { margin-left: 5px; width: 130px; height: 39px; padding-top: 7px; border-right: 1px solid #a0a0a0; white-space: nowrap; letter-spacing: -.22px; }
.install { margin-left: 6px; white-space: nowrap; }
.hint button { height: 21px; border: 1px solid #adadad; background: #e1e1e1; padding: 0; font: inherit; letter-spacing: inherit; }
.finish { margin-left: auto; width: 103px; }
.help { margin: 0 11px 0 7px; width: 74px; }
.dismiss { align-self: flex-start; margin: 5px 4px 0 0; }

.status { height: 20px; flex: none; border-top: 1px solid #d7d7d7; background: #f0f0f0; display: flex; align-items: center; padding: 0 22px 0 1px; gap: 5px; }
.status span { margin-right: auto; letter-spacing: -.08px; }
.status i { width: 1px; height: 16px; margin: 0 4px 0 1px; background: #a0a0a0; }

.taskbar { height: 40px; display: flex; background: linear-gradient(90deg, #23383f, #22363e 30%, #20313f 50%, #1c2c41 75%, #182641); color: #fff; }
.task { width: 49.100px; flex: none; display: grid; place-items: center; padding-right: 1px; position: relative; }
.task.open::after { content: ""; position: absolute; left: 4px; bottom: 0; width: 41px; height: 2px; background: #76b9ed; }
.task.more::after { background: linear-gradient(90deg, #76b9ed 31px, #5486ad 31px); }
.task.current { background: #4c6067; }
.task.current::after { left: 0; width: 100%; }
.tray { margin-left: auto; display: flex; align-items: center; padding-right: 3px; }
.t2 { margin-left: 10px; }
.t3 { margin-left: 7px; }
.lang { margin-left: 9px; font: 18px/24px "Noto Sans", sans-serif; }
.datetime { width: 80px; margin-left: 6px; text-align: center; font: 12px/18px "Noto Sans", "Noto Sans CJK KR", sans-serif; letter-spacing: .2px; }
.t4 { margin-left: 13px; margin-right: 21px; }
.tray::after { content: ""; width: 1px; height: 40px; background: #53617a; }
```
